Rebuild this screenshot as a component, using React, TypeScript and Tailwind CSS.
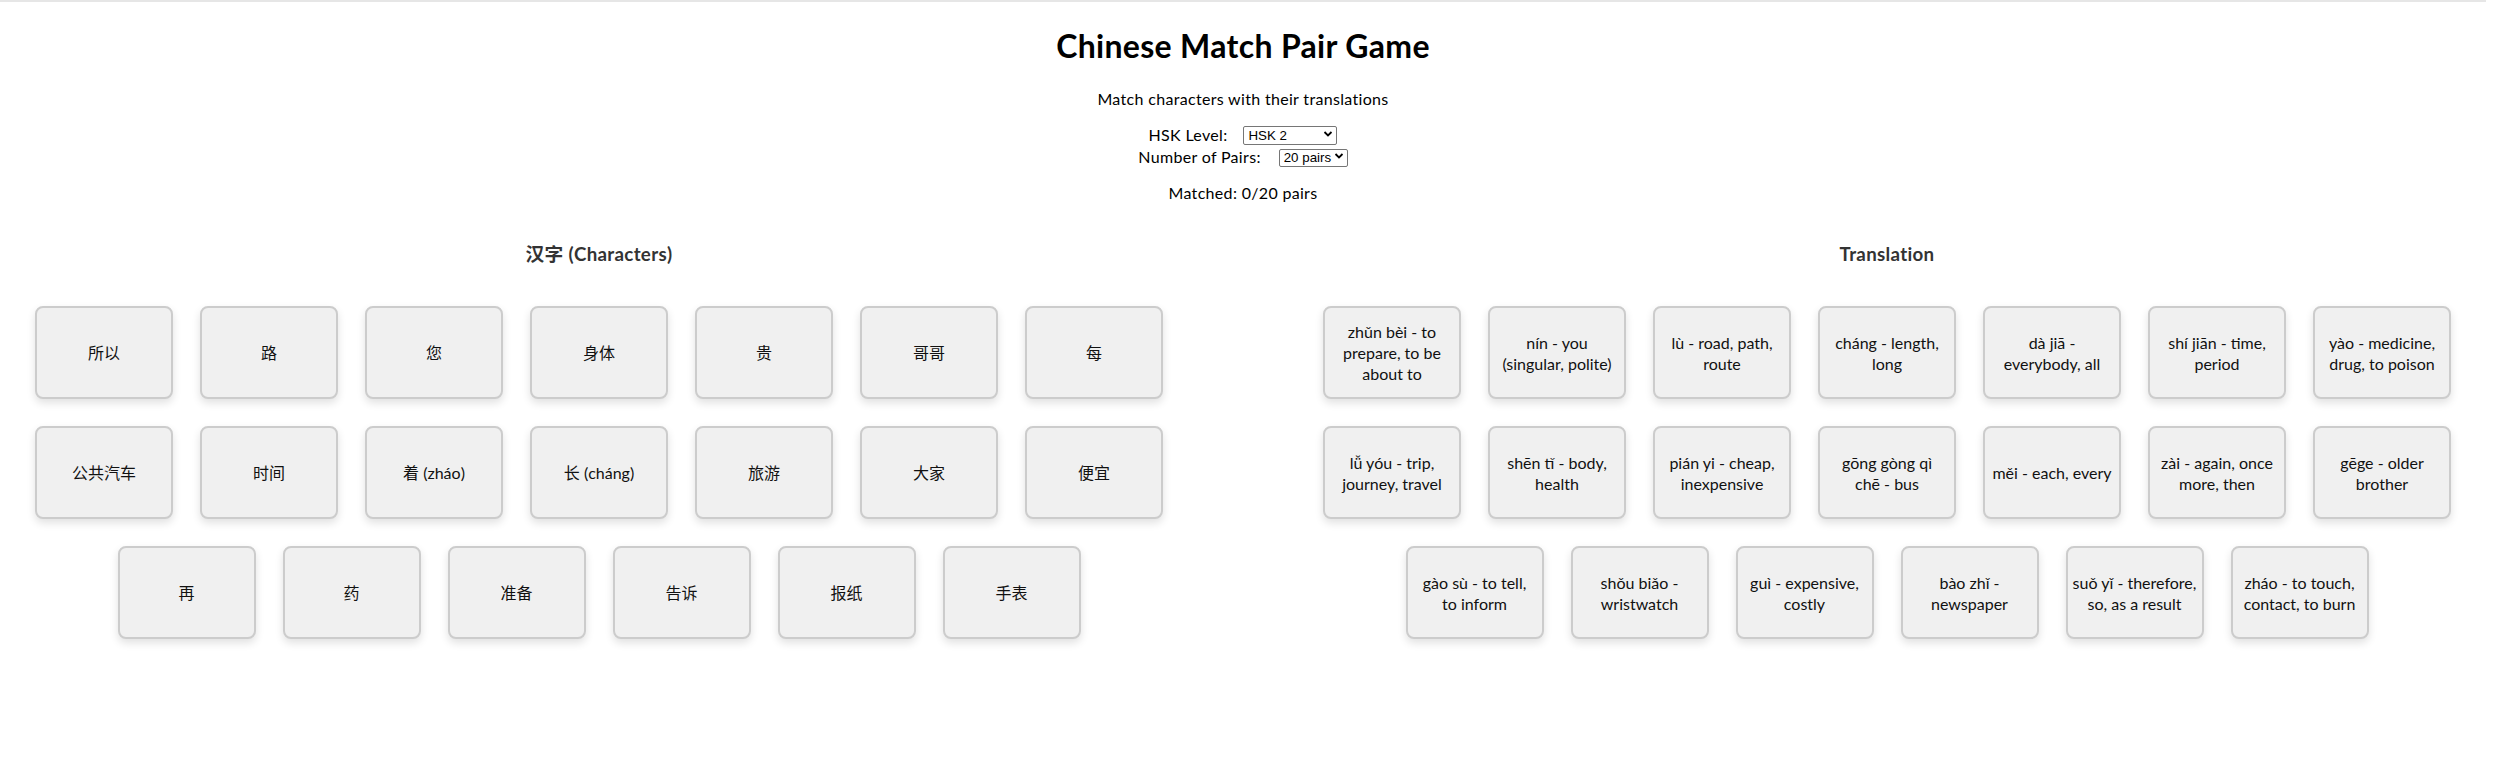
import React, { useState } from 'react';

const characters: string[] = [
  '所以', '路', '您', '身体', '贵', '哥哥', '每',
  '公共汽车', '时间', '着 (zháo)', '长 (cháng)', '旅游', '大家', '便宜',
  '再', '药', '准备', '告诉', '报纸', '手表',
];

// line breaks follow how the cards wrap at this width
const translations: string[] = [
  'zhǔn bèi - to\nprepare, to be\nabout to',
  'nín - you\n(singular, polite)',
  'lù - road, path,\nroute',
  'cháng - length,\nlong',
  'dà jiā -\neverybody, all',
  'shí jiān - time,\nperiod',
  'yào - medicine,\ndrug, to poison',
  'lǚ yóu - trip,\njourney, travel',
  'shēn tǐ - body,\nhealth',
  'pián yi - cheap,\ninexpensive',
  'gōng gòng qì\nchē - bus',
  'měi - each, every',
  'zài - again, once\nmore, then',
  'gēge - older\nbrother',
  'gào sù - to tell,\nto inform',
  'shǒu biǎo -\nwristwatch',
  'guì - expensive,\ncostly',
  'bào zhǐ -\nnewspaper',
  'suǒ yǐ - therefore,\nso, as a result',
  'zháo - to touch,\ncontact, to burn',
];

function Chevron() {
  return (
    <svg className="pointer-events-none absolute right-[4px] top-1/2 -translate-y-1/2" width="10" height="7" viewBox="0 0 10 7">
      <path d="M1.5 1.5 L5 5 L8.5 1.5" fill="none" stroke="#000" strokeWidth="1.8" />
    </svg>
  );
}

function Card({ text, selected, onClick }: { text: string; selected: boolean; onClick: () => void }) {
  return (
    <button
      onClick={onClick}
      className={`box-border flex h-[93px] w-[138px] items-center justify-center whitespace-pre-line rounded-[8px] border-2 px-[3px] text-center text-[16px] leading-[21px] tracking-normal text-[#111] shadow-[0_4px_8px_rgba(0,0,0,0.12)] ${
        selected ? 'border-[#4a90e2] bg-[#dbeafe]' : 'border-[#cccccc] bg-[#f0f0f0]'
      }`}
    >
      {text}
    </button>
  );
}

export default function App() {
  const [level, setLevel] = useState('2');
  const [pairs, setPairs] = useState('20');
  const [selChar, setSelChar] = useState<number | null>(null);
  const [selTrans, setSelTrans] = useState<number | null>(null);

  return (
    <div className="min-h-screen bg-white pr-[8px] font-['Lato','Noto_Sans_CJK_SC',sans-serif] tracking-[0.02em] text-black">
      <div className="h-[2px] bg-[#e6e6e6]" />
      <div className="text-center">
        <h1 className="mt-[24px] text-[32px] font-bold leading-[40px]">Chinese Match Pair Game</h1>
        <p className="mt-[22px] text-[16px] leading-[21px]">Match characters with their translations</p>
        <div className="mt-[14px] text-[16px] leading-[21px]">
          <div className="flex items-center justify-center">
            <span>HSK Level:</span>
            <span className="relative ml-[16px] inline-block">
              <select
                value={level}
                onChange={(e) => setLevel(e.target.value)}
                className="h-[19px] w-[94px] appearance-none rounded-[2px] border border-[#767676] bg-white pl-[4px] font-['Liberation_Sans',sans-serif] text-[13.33px] leading-[17px] tracking-normal"
              >
                <option value="1">HSK 1</option>
                <option value="2">HSK 2</option>
                <option value="3">HSK 3</option>
              </select>
              <Chevron />
            </span>
          </div>
          <div className="flex items-center justify-center">
            <span>Number of Pairs:</span>
            <span className="relative ml-[18px] inline-block">
              <select
                value={pairs}
                onChange={(e) => setPairs(e.target.value)}
                className="h-[18px] w-[69px] appearance-none rounded-[2px] border border-[#767676] bg-white pl-[4px] font-['Liberation_Sans',sans-serif] text-[13.33px] leading-[16px] tracking-normal"
              >
                <option value="10">10 pairs</option>
                <option value="20">20 pairs</option>
              </select>
              <Chevron />
            </span>
          </div>
        </div>
        <p className="mt-[15px] text-[16px] leading-[21px]">Matched: 0/20 pairs</p>
      </div>

      <div className="mt-[39px] flex gap-[130px] px-[20px]">
        <div className="flex-1">
          <h3 className="text-center text-[18.72px] font-bold leading-[24px] text-[#333]">汉字 (Characters)</h3>
          <div className="mt-[40px] flex flex-wrap justify-center gap-[27px]">
            {characters.map((c, i) => (
              <Card key={c} text={c} selected={selChar === i} onClick={() => setSelChar(selChar === i ? null : i)} />
            ))}
          </div>
        </div>
        <div className="flex-1">
          <h3 className="text-center text-[18.72px] font-bold leading-[24px] text-[#333]">Translation</h3>
          <div className="mt-[40px] flex flex-wrap justify-center gap-[27px]">
            {translations.map((t, i) => (
              <Card key={t} text={t} selected={selTrans === i} onClick={() => setSelTrans(selTrans === i ? null : i)} />
            ))}
          </div>
        </div>
      </div>
    </div>
  );
}
